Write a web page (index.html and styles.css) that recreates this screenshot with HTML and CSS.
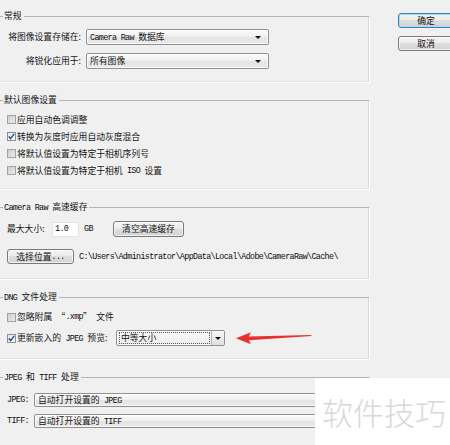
FILE: index.html
```html
<!DOCTYPE html>
<html lang="zh-CN">
<head>
<meta charset="utf-8">
<title>Camera Raw 首选项</title>
<link rel="stylesheet" href="styles.css">
</head>
<body>
<div class="dialog">
  <div class="main">
    <section class="group g1">
      <div class="title">常规</div>
      <div class="form">
        <span class="lbl">将图像设置存储在:</span>
        <div class="combo"><span class="val"><span class="m">Camera Raw </span>数据库</span><span class="caret"></span></div>
        <span class="lbl">将锐化应用于:</span>
        <div class="combo"><span class="val">所有图像</span><span class="caret"></span></div>
      </div>
    </section>

    <section class="group g2">
      <div class="title">默认图像设置</div>
      <div class="checks">
        <label class="check"><span class="cb"></span>应用自动色调调整</label>
        <label class="check"><span class="cb on"><svg viewBox="0 0 9 9" width="9" height="9"><path d="M1.8 4.6 L3.6 6.6 L7.2 1.9" fill="none" stroke="#1f4fa8" stroke-width="1.5"/></svg></span>转换为灰度时应用自动灰度混合</label>
        <label class="check"><span class="cb"></span>将默认值设置为特定于相机序列号</label>
        <label class="check"><span class="cb"></span>将默认值设置为特定于相机<span class="m"> ISO </span>设置</label>
      </div>
    </section>

    <section class="group g3">
      <div class="title"><span class="m">Camera Raw </span>高速缓存</div>
      <div class="row size-row">
        <span class="size-lbl">最大大小:</span>
        <span class="field"><span class="m">1.0</span></span>
        <span class="unit m">GB</span>
        <button class="btn clear">清空高速缓存</button>
      </div>
      <div class="row path-row">
        <button class="btn pick">选择位置<span class="m">...</span></button>
        <span class="path m">C:\Users\Administrator\AppData\Local\Adobe\CameraRaw\Cache\</span>
      </div>
    </section>

    <section class="group g4">
      <div class="title"><span class="m">DNG </span>文件处理</div>
      <label class="check tall"><span class="cb"></span>忽略附属<span class="m"> </span>“<span class="m">.xmp</span>”<span class="m"> </span>文件</label>
      <div class="row dng-row">
        <span class="cb on"><svg viewBox="0 0 9 9" width="9" height="9"><path d="M1.8 4.6 L3.6 6.6 L7.2 1.9" fill="none" stroke="#1f4fa8" stroke-width="1.5"/></svg></span>
        <span class="dng-lbl">更新嵌入的<span class="m"> JPEG </span>预览:</span>
        <div class="combo dd"><span class="focus">中等大小</span><span class="dd-btn"><span class="caret"></span></span></div>
        <svg class="pointer" width="78" height="16" viewBox="0 0 78 16">
          <polygon points="1,8.2 16,2.3 13.8,6.6 76,5 76.5,6 13.8,10.2 16,14.3" fill="#e8302d"/>
        </svg>
      </div>
    </section>

    <section class="group g5">
      <div class="title"><span class="m">JPEG </span>和<span class="m"> TIFF </span>处理</div>
      <div class="form2">
        <span class="m lbl2">JPEG:</span>
        <div class="combo slim"><span class="val">自动打开设置的<span class="m"> JPEG</span></span><span class="caret"></span></div>
        <span class="m lbl2">TIFF:</span>
        <div class="combo slim"><span class="val">自动打开设置的<span class="m"> TIFF</span></span><span class="caret"></span></div>
      </div>
    </section>
  </div>

  <div class="side">
    <button class="btn side-btn default">确定</button>
    <button class="btn side-btn">取消</button>
  </div>
</div>

<div class="watermark">软件技巧</div>
</body>
</html>
```

FILE: styles.css
```css
* { box-sizing: border-box; }

html, body { margin: 0; padding: 0; }

body {
  width: 450px;
  height: 445px;
  overflow: hidden;
  position: relative;
  background: #f0f0f0;
  font-family: "Noto Sans CJK SC", sans-serif;
  font-size: 8.8px;
  line-height: 12px;
  color: #151515;
}

/* half-width latin text, like the dialog's mono face */
.m {
  font-family: "Liberation Mono", monospace;
  font-size: 8.4px;
  letter-spacing: -0.64px;
  white-space: pre;
  color: #0c0c0c;
}

.dialog { display: flex; }

.main {
  width: 376px;
  flex-shrink: 0;
  margin-left: -6px;
  padding-top: 16px;
}

/* etched group boxes */
.group {
  border-top: 1px solid #b4b4b4;
  border-right: 1px solid #ffffff;
  border-bottom: 1px solid #ffffff;
  box-shadow: inset -1px 0 0 #dadada, inset 0 -1px 0 #e2e2e2;
  padding-left: 13px;
}
.group + .group { margin-top: 17px; }

.title {
  width: fit-content;
  height: 12px;
  margin: -7px 0 0 -4px;
  padding: 0 2px 0 1px;
  background: #f0f0f0;
  white-space: nowrap;
}

/* group 1 */
.g1 { padding-bottom: 13px; }
.form {
  margin-top: 7px;
  display: grid;
  grid-template-columns: 79px 183px;
  grid-auto-rows: 16px;
  row-gap: 8px;
  align-items: center;
}
.lbl {
  text-align: right;
  padding-right: 5px;
  white-space: nowrap;
}

/* combo boxes */
.combo {
  height: 16px;
  border: 1px solid #8f8f8f;
  border-radius: 2px;
  background: linear-gradient(#fbfbfb, #eeeeee 50%, #e3e3e3 51%, #e9e9e9);
  box-shadow: inset 0 0 0 1px rgba(255, 255, 255, 0.7);
  display: flex;
  align-items: center;
  padding-left: 3px;
}
.combo .val { flex: 1; white-space: nowrap; overflow: hidden; }
.caret {
  width: 0;
  height: 0;
  border-left: 3px solid transparent;
  border-right: 3px solid transparent;
  border-top: 3px solid #111;
  margin-right: 7px;
}

/* group 2 */
.g2 { padding-bottom: 10px; }
.checks { margin-top: 5px; }
.check {
  height: 17px;
  display: flex;
  align-items: center;
  white-space: nowrap;
}
.cb {
  width: 9px;
  height: 9px;
  flex-shrink: 0;
  margin-right: 1px;
  border: 1px solid #a3a3a3;
  background: linear-gradient(135deg, #cdcdcd, #ececec);
  display: flex;
}
.cb.on {
  border-color: #8e8f8f;
  background: linear-gradient(135deg, #e4e4e4, #fdfdfd);
}
.cb svg { margin: -1px; flex-shrink: 0; }

/* group 3 */
.g3 { padding-bottom: 15px; }
.row { display: flex; align-items: center; white-space: nowrap; }
.size-row { margin-top: 8px; height: 16px; }
.size-lbl { width: 45px; }
.field {
  width: 27px;
  height: 15px;
  background: #fff;
  border: 1px solid #e4e4e4;
  padding-left: 2px;
  display: flex;
  align-items: center;
}
.unit { width: 34px; padding-left: 5px; }

.btn {
  font: inherit;
  color: inherit;
  padding: 0;
  margin: 0;
  height: 15px;
  border: 1px solid #7a7a7a;
  border-radius: 3px;
  background: linear-gradient(#f4f4f4, #ececec 45%, #dedede 50%, #d2d2d2);
  box-shadow: inset 0 0 0 1px rgba(255, 255, 255, 0.65);
  display: flex;
  align-items: center;
  justify-content: center;
  white-space: nowrap;
}
.clear { width: 71px; height: 16px; }
.path-row { margin-top: 12px; height: 15px; }
.pick { width: 67px; }
.path { margin-left: 5px; }

/* group 4 */
.g4 { padding-bottom: 13px; }
.check.tall { margin-top: 6px; height: 16px; }
.dng-row { margin-top: 5px; height: 16px; }
.dng-lbl { width: 99px; }
.combo.dd {
  width: 109px;
  padding: 0;
  background: linear-gradient(#f9f9f9, #ececec);
}
.focus {
  flex: 1;
  height: 12px;
  margin: 0 1px 0 2px;
  border: 1px dotted #555;
  display: flex;
  align-items: center;
  padding-left: 1px;
}
.dd-btn {
  width: 13px;
  height: 100%;
  border-left: 1px solid #b5b5b5;
  background: linear-gradient(#f6f6f6, #e0e0e0);
  display: flex;
  align-items: center;
  justify-content: center;
}
.dd-btn .caret { margin: 0; }
.pointer { margin-left: 10px; flex-shrink: 0; }

/* group 5 */
.g5 { padding-bottom: 20px; }
.form2 {
  margin-top: 10px;
  display: grid;
  grid-template-columns: 27px 330px;
  grid-auto-rows: 14px;
  row-gap: 7px;
  align-items: center;
}
.combo.slim { height: 14px; }

/* dialog buttons */
.side {
  margin-left: 28px;
  padding-top: 13px;
  display: flex;
  flex-direction: column;
  gap: 8px;
}
.side-btn { width: 56px; flex-shrink: 0; }
.side-btn.default {
  border-color: #3c7fb1;
  box-shadow: inset 0 0 0 1px #a8dcf6;
}

/* corner watermark */
.watermark {
  position: absolute;
  left: 315px;
  top: 378px;
  width: 135px;
  height: 67px;
  background: #ffffff;
  display: flex;
  align-items: center;
  padding-left: 7px;
  font-size: 31px;
  line-height: 1;
  font-weight: 300;
  color: #d8d8d8;
  white-space: nowrap;
}
```
